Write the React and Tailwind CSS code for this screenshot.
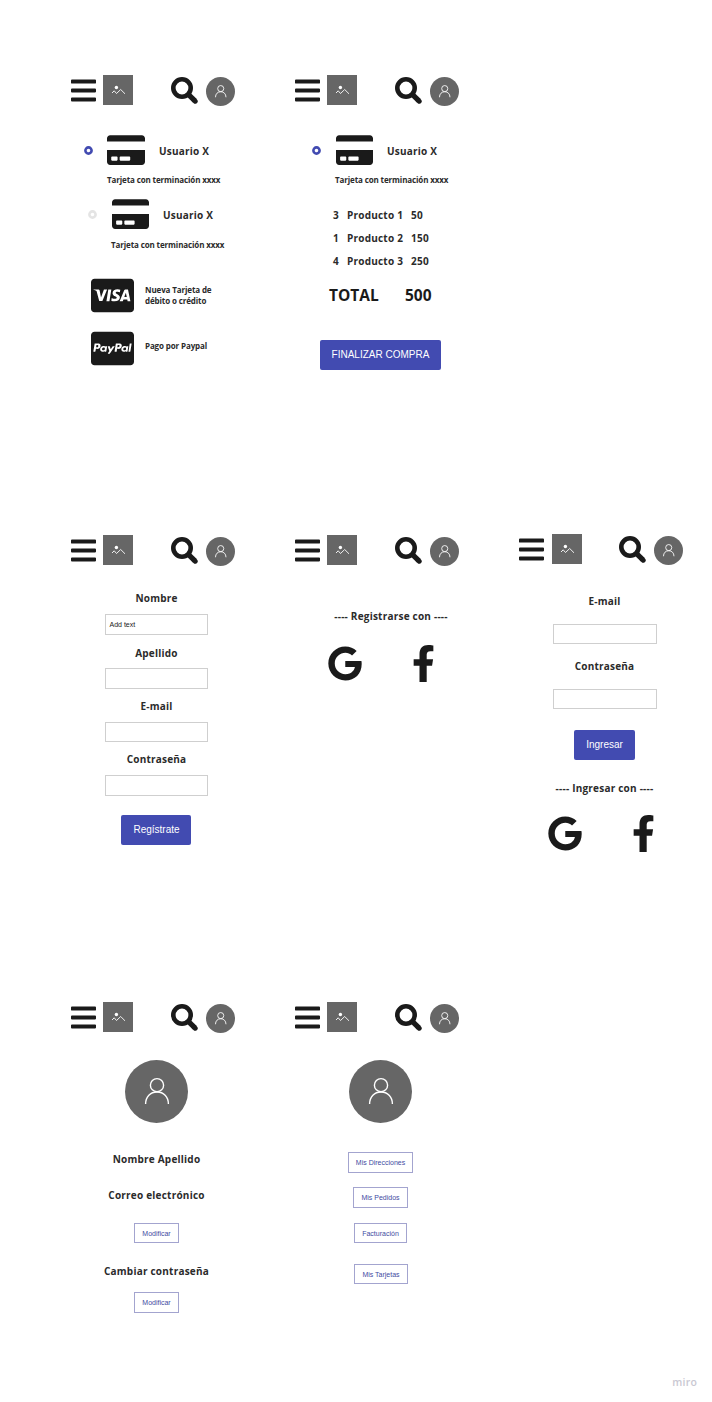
import React from "react";
import { FaBars, FaCreditCard, FaCcVisa, FaCcPaypal, FaGoogle, FaFacebookF } from "react-icons/fa";

const Avatar = ({ className, stroke }) => (
  <svg viewBox="0 0 63 63" className={`block shrink-0 ${className}`} fill="none">
    <circle cx="31.5" cy="31.5" r="31.5" fill="#666" />
    <g stroke="#fff" strokeWidth={stroke}>
      <circle cx="32" cy="25.2" r="6.6" />
      <path d="M20.6 44C20.6 36.5 25.5 32 32 32s11.4 4.5 11.4 12" />
    </g>
  </svg>
);

const ImageTile = ({ className }) => (
  <svg viewBox="0 0 30 30" className={`block h-[30px] w-[30px] shrink-0 bg-[#666] ${className}`} fill="none">
    <circle cx="13.4" cy="12.5" r="1.7" fill="#fff" />
    <path d="M9 18l2.2-2.2 2.3 2.7 4.2-4 4.3 4.3" stroke="#fff" strokeWidth=".9" />
  </svg>
);

const Search = ({ className }) => (
  <svg viewBox="0 0 27 27" className={`block h-[27px] w-[27px] shrink-0 ${className}`} fill="none" stroke="currentColor">
    <circle cx="11" cy="11" r="8.7" strokeWidth="4.6" />
    <path d="M17.3 17.3l6.4 6.4" strokeWidth="5.2" />
    <path d="M23.3 23.3l.9.9" strokeWidth="5" strokeLinecap="round" />
  </svg>
);

const Radio = ({ className }) => (
  <svg viewBox="0 0 9 9" className={`-mt-px block h-[9px] w-[9px] shrink-0 ${className}`} fill="none" stroke="currentColor">
    <circle cx="4.5" cy="4.5" r="3.1" strokeWidth="2.6" />
  </svg>
);

const Header = ({ tileSpacing }) => (
  <header className="flex h-[31px] w-full items-start pl-[27px]">
    <FaBars className="mt-px h-[29px] w-[25px] shrink-0" />
    <ImageTile className={tileSpacing} />
    <Search className="mt-[2px]" />
    <Avatar className="ml-[8px] mt-[2px] h-[29px] w-[29px]" stroke="1.9" />
  </header>
);

const Screen = ({ className = "", tileSpacing = "ml-[7px] mr-[38px]", children }) => (
  <section className={`flex w-[224px] shrink-0 flex-col items-center ${className}`}>
    <Header tileSpacing={tileSpacing} />
    {children}
  </section>
);

const Label = ({ className = "", children }) => (
  <div className={`h-3 whitespace-nowrap pl-px text-[10px] leading-3 font-bold tracking-[0.22px] text-[#2b2b2b] ${className}`}>
    {children}
  </div>
);

const Caption = ({ className = "", children }) => (
  <div className={`whitespace-nowrap text-[8px] leading-[11px] font-bold tracking-[-0.12px] text-[#2b2b2b] ${className}`}>{children}</div>
);

const Field = ({ className = "", children }) => (
  <div className={`flex shrink-0 items-center border border-[#cfcfcf] pl-1 font-['Liberation_Sans',sans-serif] text-[7px] leading-none ${className}`}>
    {children}
  </div>
);

const Primary = ({ className = "", children }) => (
  <button className={`flex h-[30px] shrink-0 items-center justify-center whitespace-nowrap rounded-[2px] bg-[#424bb1] pl-px font-['Liberation_Sans',sans-serif] text-[10px] leading-none text-white ${className}`}>
    {children}
  </button>
);

const Outline = ({ className = "", children }) => (
  <button className={`flex shrink-0 items-center justify-center whitespace-nowrap border border-[#a3a4cf] pl-px font-['Liberation_Sans',sans-serif] text-[7px] leading-none text-[#424b9f] ${className}`}>
    {children}
  </button>
);

const Card = ({ className = "", ring, icon = "ml-[14px] w-[38px]", caption, captionGap = "mt-[8px]" }) => (
  <div className={`w-full ${className}`}>
    <div className="flex h-[31px] items-center">
      <Radio className={ring} />
      <FaCreditCard className={`-mt-[2px] h-[34px] shrink-0 ${icon}`} preserveAspectRatio="none" />
      <Label className="ml-[13px]">Usuario X</Label>
    </div>
    <Caption className={`pl-[23px] ${captionGap}`}>{caption}</Caption>
  </div>
);

const Product = ({ qty, name, price }) => (
  <div className="grid h-[23px] grid-cols-[14px_64px_30px] items-center">
    <Label>{qty}</Label>
    <Label>{name}</Label>
    <Label>{price}</Label>
  </div>
);

const Social = ({ className = "" }) => (
  <div className={`flex h-[37px] w-full items-center ${className}`}>
    <FaGoogle className="h-[35px] w-[34px] shrink-0" />
    <FaFacebookF className="ml-[50px] h-[37px] w-[23px] shrink-0" />
  </div>
);

export default function App() {
  return (
    <main className="flex h-[1402px] w-[712px] flex-col overflow-hidden bg-white pt-[75px] font-['Open_Sans','Noto_Sans',sans-serif] text-[#1a1a1a]">
      <div className="flex h-[460px] shrink-0 pl-[44px]">
        <Screen>
          <Card className="mt-[29px] pl-[40px]" ring="text-[#424bb1]" caption="Tarjeta con terminación xxxx" />
          <Card
            className="mt-[14px] pl-[44px]"
            ring="text-[#e4e4e4]"
            icon="ml-[15px] w-[37px]"
            caption="Tarjeta con terminación xxxx"
            captionGap="mt-[9px]"
          />
          <div className="mt-[28px] flex h-[35px] w-full items-center pl-[47px]">
            <FaCcVisa className="h-[39px] w-[43px] shrink-0" />
            <Caption className="-mt-px ml-[11px]">
              Nueva Tarjeta de
              <br />
              débito o crédito
            </Caption>
          </div>
          <div className="mt-[18px] flex h-[35px] w-full items-center pl-[47px]">
            <FaCcPaypal className="h-[39px] w-[43px] shrink-0" />
            <Caption className="-mt-[6px] ml-[11px]">Pago por Paypal</Caption>
          </div>
        </Screen>
        <Screen>
          <Card
            className="mt-[29px] pl-[44px]"
            ring="text-[#424bb1]"
            icon="ml-[15px] w-[37px]"
            caption="Tarjeta con terminación xxxx"
          />
          <div className="mt-[18px] w-full pl-[64px]">
            <Product qty="3" name="Producto 1" price="50" />
            <Product qty="1" name="Producto 2" price="150" />
            <Product qty="4" name="Producto 3" price="250" />
          </div>
          <div className="mt-[13px] flex h-5 w-full pl-[61px] text-[15.5px] leading-5 font-bold">
            <span className="w-[76px]">TOTAL</span>
            <span>500</span>
          </div>
          <Primary className="mt-[35px] w-[121px]">FINALIZAR COMPRA</Primary>
        </Screen>
      </div>

      <div className="flex h-[467px] shrink-0 pl-[44px]">
        <Screen>
          <Label className="mt-[26px]">Nombre</Label>
          <Field className="mt-[10px] h-[21px] w-[103px]">Add text</Field>
          <Label className="mt-[12px]">Apellido</Label>
          <Field className="mt-[9px] h-[21px] w-[103px]" />
          <Label className="mt-[11px]">E-mail</Label>
          <Field className="mt-[10px] h-[20px] w-[103px]" />
          <Label className="mt-[11px]">Contraseña</Label>
          <Field className="mt-[10px] h-[21px] w-[103px]" />
          <Primary className="mt-[19px] w-[70px]">Regístrate</Primary>
        </Screen>
        <Screen>
          <Label className="ml-[21px] mt-[44px]">---- Registrarse con ----</Label>
          <Social className="mt-[23px] pl-[60px]" />
        </Screen>
        <Screen className="-mt-px" tileSpacing="ml-[8px] mr-[37px]">
          <Label className="mt-[30px]">E-mail</Label>
          <Field className="mt-[17px] ml-[2px] h-[20px] w-[104px]" />
          <Label className="mt-[16px]">Contraseña</Label>
          <Field className="mt-[17px] ml-[2px] h-[20px] w-[104px]" />
          <Primary className="mt-[21px] w-[61px]">Ingresar</Primary>
          <Label className="mt-[22px]">---- Ingresar con ----</Label>
          <Social className="mt-[21px] pl-[56px]" />
        </Screen>
      </div>

      <div className="flex h-[373px] shrink-0 pl-[44px]">
        <Screen>
          <Avatar className="mt-[27px] h-[63px] w-[63px]" stroke="1.4" />
          <Label className="mt-[30px]">Nombre Apellido</Label>
          <Label className="mt-[24px]">Correo electrónico</Label>
          <Outline className="mt-[22px] h-[20px] w-[45px]">Modificar</Outline>
          <Label className="mt-[22px]">Cambiar contraseña</Label>
          <Outline className="mt-[15px] h-[21px] w-[45px]">Modificar</Outline>
        </Screen>
        <Screen>
          <Avatar className="mt-[27px] h-[63px] w-[63px]" stroke="1.4" />
          <Outline className="mt-[29px] h-[21px] w-[65px]">Mis Direcciones</Outline>
          <Outline className="mt-[14px] h-[21px] w-[55px]">Mis Pedidos</Outline>
          <Outline className="mt-[15px] h-[20px] w-[53px]">Facturación</Outline>
          <Outline className="ml-px mt-[21px] h-[20px] w-[54px]">Mis Tarjetas</Outline>
        </Screen>
      </div>
      <footer className="pr-[15px] text-right text-[10.5px] leading-[14px] font-semibold tracking-[0.2px] text-[#c9c8d2]">miro</footer>
    </main>
  );
}
